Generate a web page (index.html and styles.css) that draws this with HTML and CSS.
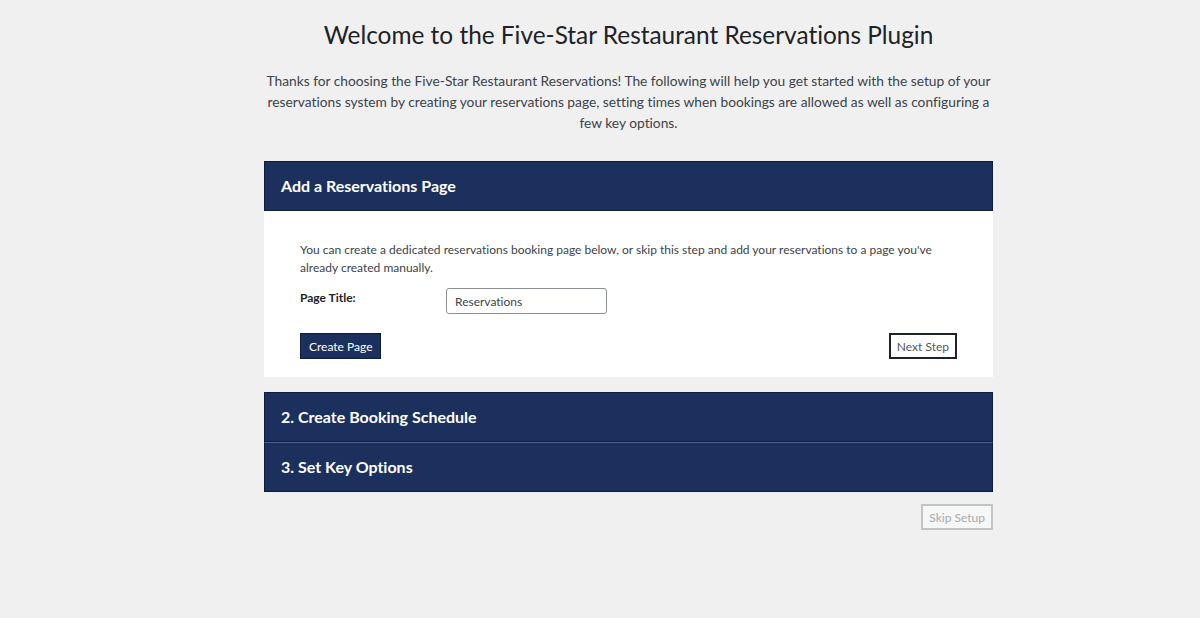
FILE: index.html
```html
<!DOCTYPE html>
<html lang="en">
<head>
  <meta charset="UTF-8" />
  <meta name="viewport" content="width=device-width, initial-scale=1.0"/>
  <title>Five-Star Restaurant Reservations - Setup</title>
  <link rel="stylesheet" href="styles.css">
</head>
<body>
  <div class="wizard">
    <h1>Welcome to the Five-Star Restaurant Reservations Plugin</h1>
    <p class="intro">Thanks for choosing the Five-Star Restaurant Reservations! The following will help you get started with the setup of your reservations system by creating your reservations page, setting times when bookings are allowed as well as configuring a few key options.</p>

    <section class="step open">
      <h2 class="step-title">Add a Reservations Page</h2>
      <div class="step-body">
        <p class="step-desc">You can create a dedicated reservations booking page below, or skip this step and add your reservations to a page you've already created manually.</p>
        <div class="field">
          <label for="page_title">Page Title:</label>
          <input type="text" id="page_title" value="Reservations" />
        </div>
        <div class="actions">
          <button class="btn-primary">Create Page</button>
          <button class="btn-outline">Next Step</button>
        </div>
      </div>
    </section>

    <div class="steps-closed">
      <section class="step">
        <h2 class="step-title">2. Create Booking Schedule</h2>
      </section>
      <section class="step">
        <h2 class="step-title">3. Set Key Options</h2>
      </section>
    </div>

    <div class="skip">
      <button class="btn-skip">Skip Setup</button>
    </div>
  </div>
</body>
</html>
```

FILE: styles.css
```css
body {
  margin: 0;
  padding: 0 0 0 57px;
  background-color: #f0f0f1;
  font-family: Lato, "Noto Sans", sans-serif;
  font-variant-ligatures: no-common-ligatures;
  color: #3c434a;
}

.wizard {
  width: 729px;
  margin: 0 auto;
  padding-top: 19px;
}

h1 {
  margin: 0;
  font-size: 24.4px;
  font-weight: 400;
  color: #1d2327;
  text-align: center;
  line-height: 32px;
}

.intro {
  margin: 19px 0 28px;
  font-size: 13.75px;
  line-height: 21px;
  text-align: center;
}

.step-title {
  margin: 0;
  height: 48px;
  line-height: 48px;
  padding: 0 16px;
  font-size: 16px;
  font-weight: 700;
  color: #fff;
  background: #1c305e;
  border: 1px solid #0f1d3d;
}

.step-body {
  background: #fff;
  padding: 30px 36px 18px;
}

.step-desc {
  margin: 0 0 11px;
  font-size: 12px;
  line-height: 18px;
}

.field {
  display: flex;
  align-items: flex-start;
}

.field label {
  width: 146px;
  font-size: 12px;
  font-weight: 700;
  color: #1d2327;
  padding-top: 2px;
}

.field input {
  width: 161px;
  height: 26px;
  box-sizing: border-box;
  padding: 0 8px;
  border: 1px solid #8c8f94;
  border-radius: 3px;
  font-family: inherit;
  font-variant-ligatures: no-common-ligatures;
  font-size: 12px;
  color: #3c434a;
}

.actions {
  display: flex;
  justify-content: space-between;
  margin-top: 19px;
}

.actions button {
  height: 26px;
  padding: 0 8px;
  font-family: inherit;
  font-size: 12px;
  cursor: pointer;
}

.btn-primary {
  background: #1c305e;
  color: #fff;
  border: 1px solid #0f1d3d;
}

.actions .btn-outline {
  padding: 0 6px;
  background: #fff;
  color: #50575e;
  border: 2px solid #1d2327;
}

.steps-closed {
  margin-top: 15px;
}

.steps-closed .step + .step .step-title {
  border-top: 1px solid #4d6596;
}

.skip {
  display: flex;
  justify-content: flex-end;
  margin-top: 12px;
}

.btn-skip {
  height: 26px;
  padding: 0 6px;
  background: #f6f7f7;
  border: 2px solid #c3c4c7;
  color: #a7aaad;
  font-family: inherit;
  font-size: 12px;
}
```
